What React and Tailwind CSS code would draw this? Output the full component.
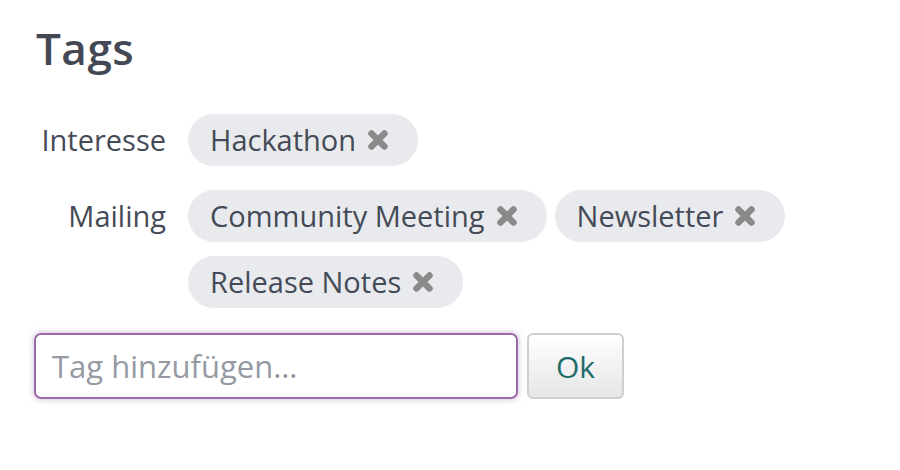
import React from "react";

function X() {
  return (
    <svg width="22" height="22" viewBox="0 0 22 22" className="shrink-0">
      <path d="M4.5 4.5 L17.5 17.5 M17.5 4.5 L4.5 17.5" stroke="#8a8a8a" strokeWidth="6.5" strokeLinecap="round" />
    </svg>
  );
}

function Chip({ label }) {
  return (
    <div className="flex h-[52px] items-center gap-[11px] rounded-full bg-[#e8eaee] pl-[22px] pr-[29px] text-[29px] text-[#454a57]">
      <span>{label}</span>
      <X />
    </div>
  );
}

export default function App() {
  return (
    <div className="h-[470px] w-[900px] bg-white pl-[34px] pt-[24px] text-[#454a57]" style={{ fontFamily: "'Open Sans', Lato, sans-serif" }}>
      <h1 className="pl-[2px] text-[44px] font-semibold leading-[48px] tracking-[0.5px] text-[#434854]">Tags</h1>
      <div className="mt-[42px] flex flex-col gap-[24px]">
        <div className="flex gap-[22px]">
          <div className="w-[132px] shrink-0 text-right text-[29px] leading-[52px]">Interesse</div>
          <div className="flex flex-wrap gap-[8px]">
            <Chip label="Hackathon" />
          </div>
        </div>
        <div className="flex gap-[22px]">
          <div className="w-[132px] shrink-0 text-right text-[29px] leading-[52px]">Mailing</div>
          <div className="flex w-[620px] flex-wrap gap-x-[8px] gap-y-[14px]">
            <Chip label="Community Meeting" />
            <Chip label="Newsletter" />
            <Chip label="Release Notes" />
          </div>
        </div>
      </div>
      <div className="mt-[25px] flex gap-[9px]">
        <input
          className="h-[66px] w-[484px] rounded-[7px] border-2 border-[#9a6aa6] px-[16px] text-[31px] text-[#454a57] shadow-[0_0_6px_rgba(155,106,166,0.5)] outline-none placeholder:text-[#959aa3]"
          placeholder="Tag hinzufügen…"
        />
        <button className="h-[66px] w-[97px] rounded-[6px] border-2 border-[#cfcfcf] bg-gradient-to-b from-white to-[#e6e6e6] text-[30px] text-[#1f6c6c]">Ok</button>
      </div>
    </div>
  );
}
